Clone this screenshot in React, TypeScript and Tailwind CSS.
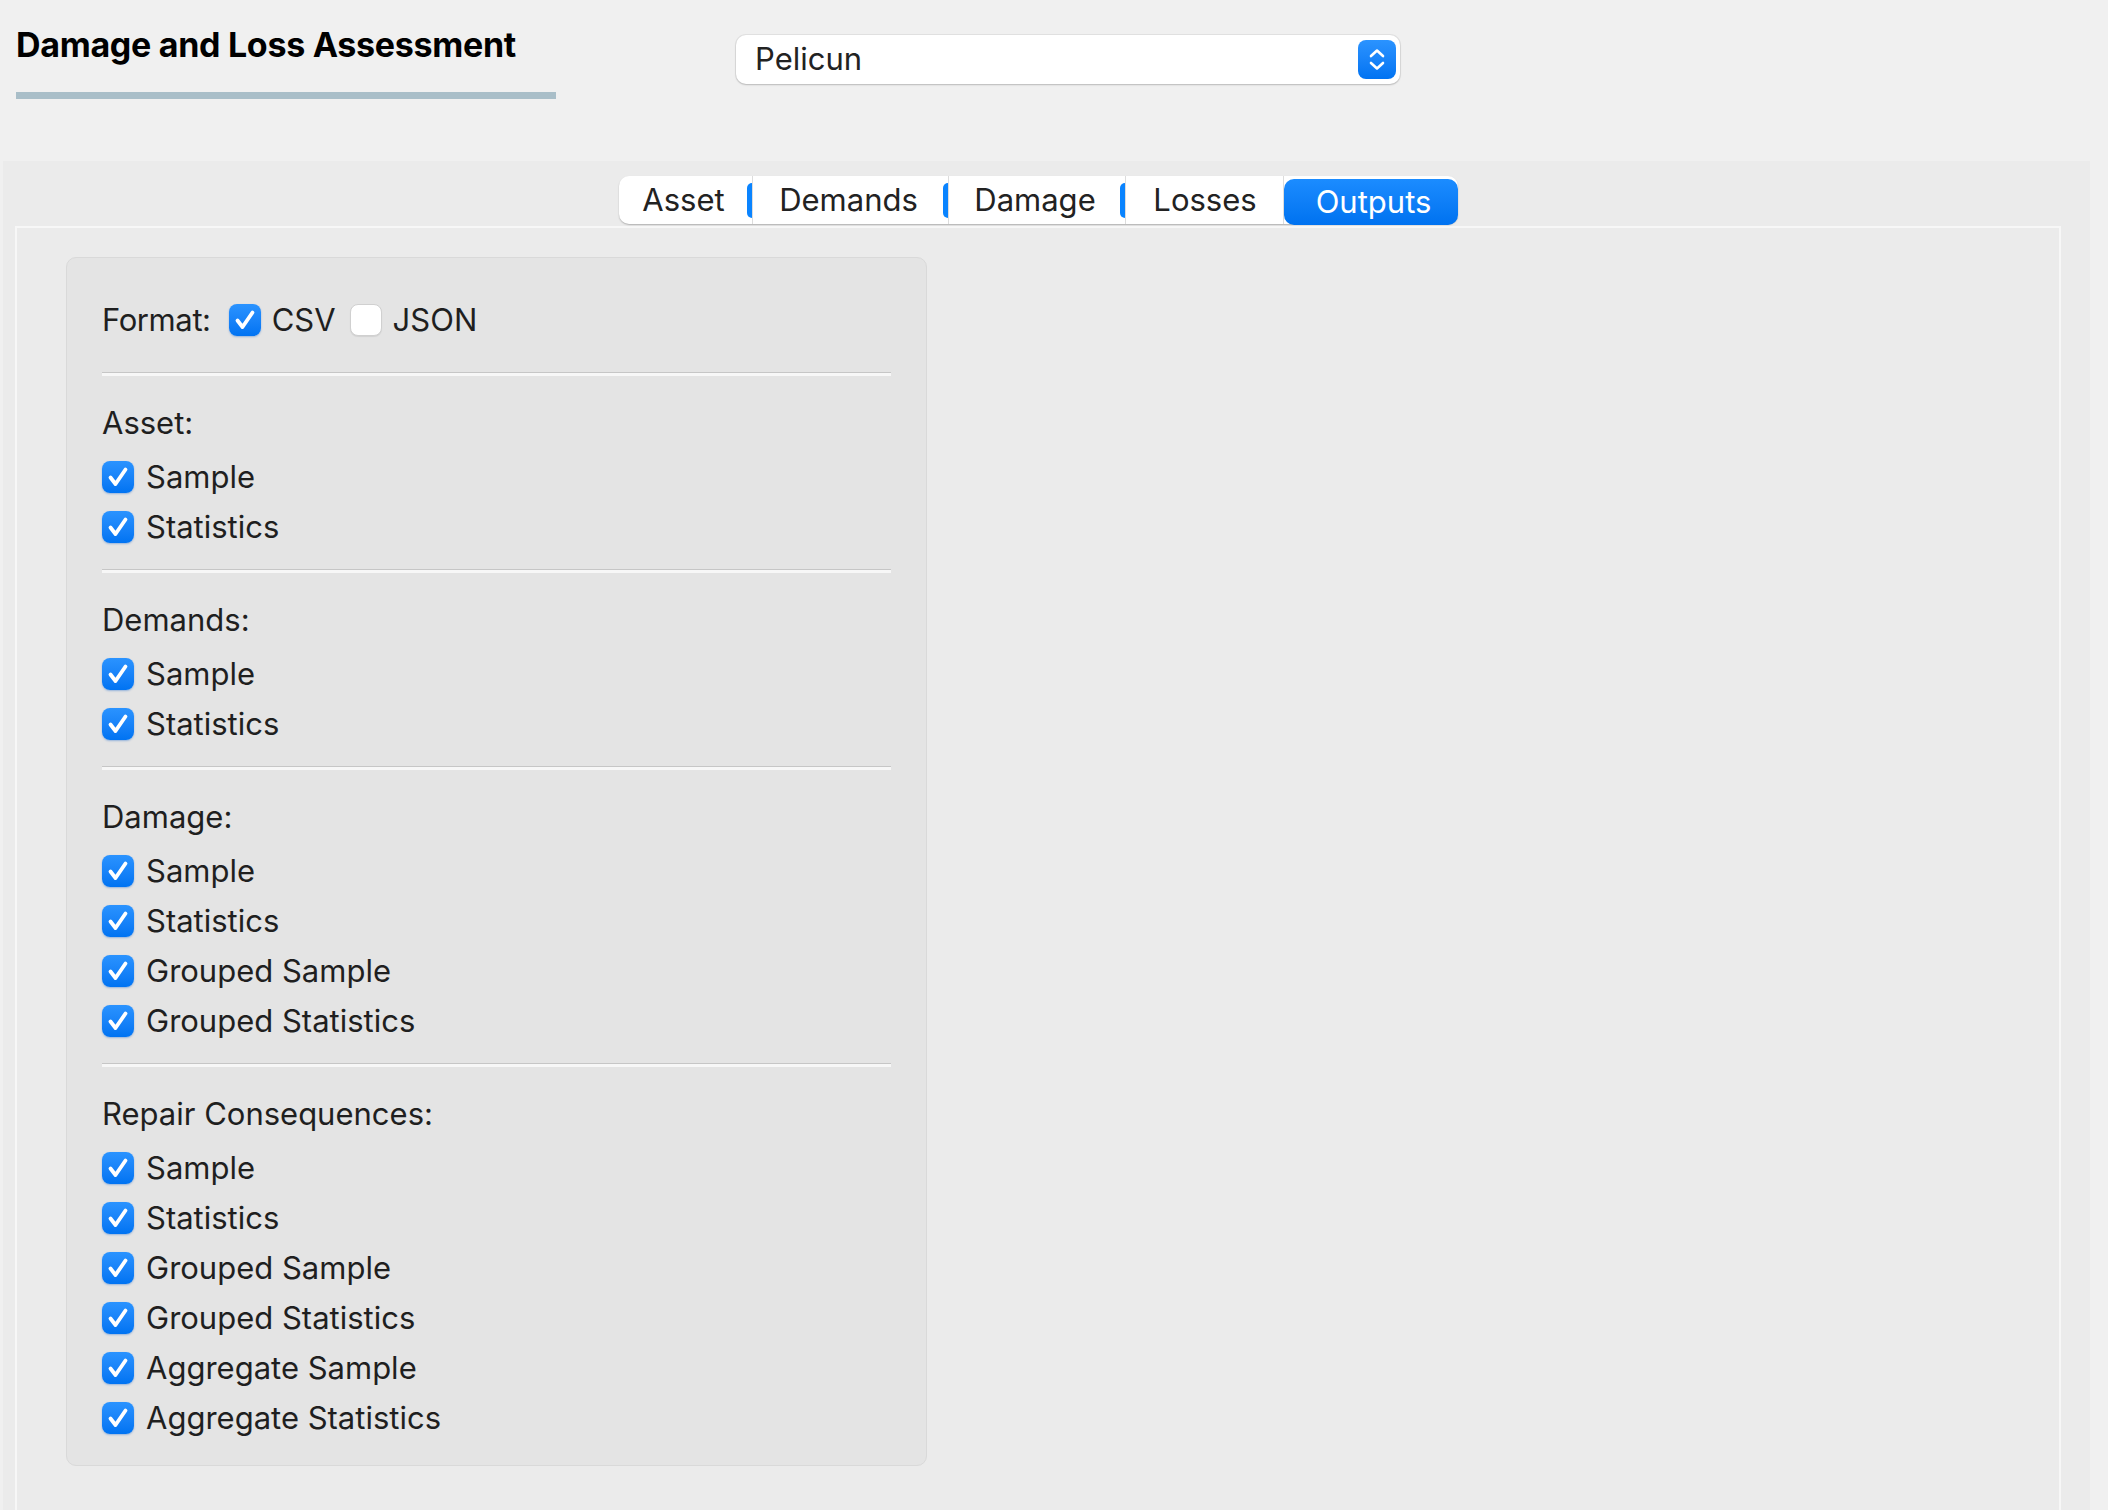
import React from "react";

const tabs = [
  { label: "Asset", w: "w-[134px]", mark: true },
  { label: "Demands", w: "w-[196px]", mark: true },
  { label: "Damage", w: "w-[177px]", mark: true },
  { label: "Losses", w: "w-[158px]", mark: false },
];

const sections = [
  { title: "Asset:", items: ["Sample", "Statistics"] },
  { title: "Demands:", items: ["Sample", "Statistics"] },
  { title: "Damage:", items: ["Sample", "Statistics", "Grouped Sample", "Grouped Statistics"] },
  {
    title: "Repair Consequences:",
    items: ["Sample", "Statistics", "Grouped Sample", "Grouped Statistics", "Aggregate Sample", "Aggregate Statistics"],
  },
];

function Check({ on = true }: { on?: boolean }) {
  if (!on) {
    return <div className="w-[32px] h-[32px] shrink-0 rounded-[8px] bg-white border border-[#d0d0d0] shadow-[0_1px_1px_rgba(0,0,0,0.08)]" />;
  }
  return (
    <div className="w-[32px] h-[32px] shrink-0 rounded-[8px] bg-gradient-to-b from-[#2a93ff] to-[#0073f2] shadow-[0_1px_2px_rgba(0,90,200,0.35)] flex items-center justify-center">
      <svg width="32" height="32" viewBox="0 0 32 32">
        <path d="M8.5 16.5 L13.5 23 L23.5 8.5" fill="none" stroke="white" strokeWidth="3.8" strokeLinecap="round" strokeLinejoin="round" />
      </svg>
    </div>
  );
}

function Row({ label }: { label: string }) {
  return (
    <div className="h-[50px] flex items-center gap-[12px]">
      <Check />
      <span>{label}</span>
    </div>
  );
}

function Sep() {
  return <div className="h-[4px] border-t border-[#c6c6c6] bg-[#f7f7f7]" />;
}

export default function App() {
  return (
    <div className="w-[2108px] h-[1510px] overflow-hidden bg-[#f0f0f0] font-['Inter',sans-serif] text-[#1f1f1f] flex flex-col">
      {/* header */}
      <div className="h-[161px] shrink-0 flex items-start">
        <div className="pl-[16px] w-[556px]">
          <h1 className="mt-[25px] text-[34px] leading-[40px] font-bold text-black tracking-[-0.3px]">Damage and Loss Assessment</h1>
          <div className="mt-[27px] w-[540px] h-[7px] bg-[#a9bec8]" />
        </div>
        <div className="ml-[180px] mt-[35px] w-[664px] h-[49px] rounded-[10px] bg-white shadow-[0_0_0_1px_rgba(0,0,0,0.06),0_1px_2px_rgba(0,0,0,0.18)] flex items-center pl-[19px] pr-[4px]">
          <span className="flex-1 text-[31px] text-[#222]">Pelicun</span>
          <div className="w-[38px] h-[39px] rounded-[8px] bg-gradient-to-b from-[#2a93ff] to-[#0073f2] flex items-center justify-center">
            <svg width="38" height="39" viewBox="0 0 38 39">
              <path d="M13 16 L19 10.5 L25 16" fill="none" stroke="white" strokeWidth="2.6" strokeLinecap="round" strokeLinejoin="round" />
              <path d="M13 23 L19 28.5 L25 23" fill="none" stroke="white" strokeWidth="2.6" strokeLinecap="round" strokeLinejoin="round" />
            </svg>
          </div>
        </div>
      </div>

      {/* tab widget */}
      <div className="ml-[3px] w-[2087px] flex-1 bg-[#ebebeb] pt-[15px] pl-[12px]">
        <div className="w-[2046px] flex justify-center">
          <div className="h-[48px] flex rounded-[10px] bg-white shadow-[0_1px_1.5px_rgba(0,0,0,0.25)] text-[31px] text-[#222]">
            {tabs.map((t) => (
              <div key={t.label} className={`${t.w} flex items-center border-r border-[#dcdcdc]`}>
                <span className="flex-1 text-center pl-[2px]">{t.label}</span>
                {t.mark ? <div className="w-[5px] h-[35px] rounded-l-full bg-[#0a84ff]" /> : null}
              </div>
            ))}
            <div className="w-[174px] mt-[3px] -mb-[1px] rounded-[10px] bg-gradient-to-b from-[#1b8cff] to-[#0072f0] text-white flex items-center justify-center pl-[6px]">
              Outputs
            </div>
          </div>
        </div>

        {/* frame */}
        <div className="mt-[2px] w-[2046px] h-[1400px] border-2 border-[#f7f7f7] pl-[49px] pt-[29px]">
          <div className="w-[861px] rounded-[10px] bg-[#e4e4e4] border border-[#d9d9d9] px-[35px] pt-[37px] pb-[22px] text-[31px] text-[#1f1f1f]">
            <div className="h-[50px] flex items-center">
              <span className="tracking-[-0.4px]">Format:</span>
              <div className="ml-[18px]"><Check /></div>
              <span className="ml-[11px]">CSV</span>
              <div className="ml-[14px]"><Check on={false} /></div>
              <span className="ml-[11px]">JSON</span>
            </div>
            {sections.map((s, idx) => (
              <div key={s.title} className={idx === 0 ? "mt-[27px]" : "mt-[17px]"}>
                <Sep />
                <div className="mt-[22px] h-[50px] flex items-center">{s.title}</div>
                <div className="mt-[4px]">
                  {s.items.map((i) => (
                    <Row key={i} label={i} />
                  ))}
                </div>
              </div>
            ))}
          </div>
        </div>
      </div>
    </div>
  );
}
